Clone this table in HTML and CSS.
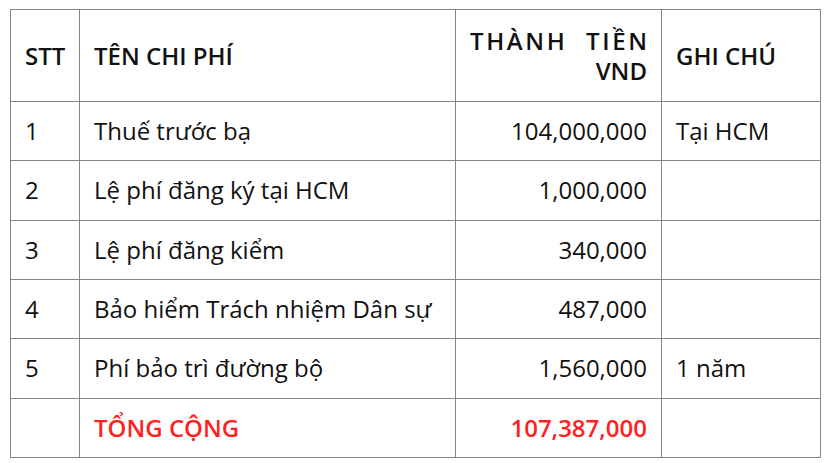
FILE: index.html
```html
<!DOCTYPE html>
<html lang="vi">
<head>
<meta charset="utf-8">
<link rel="stylesheet" href="styles.css">
</head>
<body>
<table class="cost">
  <colgroup>
    <col class="c-stt"><col class="c-name"><col class="c-amount"><col class="c-note">
  </colgroup>
  <thead>
    <tr>
      <th>STT</th>
      <th>TÊN CHI PHÍ</th>
      <th class="num head-amount"><span class="ls">THÀNH</span> <span class="ls">TIỀN</span> VND</th>
      <th>GHI CHÚ</th>
    </tr>
  </thead>
  <tbody>
    <tr><td>1</td><td>Thuế trước bạ</td><td class="num">104,000,000</td><td>Tại HCM</td></tr>
    <tr><td>2</td><td>Lệ phí đăng ký tại HCM</td><td class="num">1,000,000</td><td></td></tr>
    <tr><td>3</td><td>Lệ phí đăng kiểm</td><td class="num">340,000</td><td></td></tr>
    <tr><td>4</td><td>Bảo hiểm Trách nhiệm Dân sự</td><td class="num">487,000</td><td></td></tr>
    <tr><td>5</td><td>Phí bảo trì đường bộ</td><td class="num">1,560,000</td><td>1 năm</td></tr>
    <tr class="total"><td></td><td>TỔNG CỘNG</td><td class="num">107,387,000</td><td></td></tr>
  </tbody>
</table>
</body>
</html>
```

FILE: styles.css
```css
html, body {
  margin: 0;
  padding: 0;
  background: #ffffff;
}
body {
  padding: 9px 8px 0 10px;
  font-family: "Open Sans", "Liberation Sans", sans-serif;
  font-size: 24px;
  color: #111111;
}
.cost {
  border-collapse: collapse;
  width: 810px;
  table-layout: fixed;
}
.c-stt { width: 69px; }
.c-name { width: 376px; }
.c-amount { width: 206px; }
.c-note { width: 159px; }
.cost th,
.cost td {
  border: 1px solid #858585;
  padding: 14.17px 14px;
  line-height: 30px;
  text-align: left;
  vertical-align: middle;
}
.cost th {
  font-weight: 600;
  height: 60px;
  padding-top: 15.5px;
  padding-bottom: 15.5px;
}
.cost .num {
  text-align: right;
}
.cost th.head-amount {
  text-align: justify;
  text-align-last: right;
}
.ls {
  letter-spacing: 2.6px;
  margin-right: -2.6px;
}
.total td {
  color: #ff1f1f;
  font-weight: 600;
}
```
